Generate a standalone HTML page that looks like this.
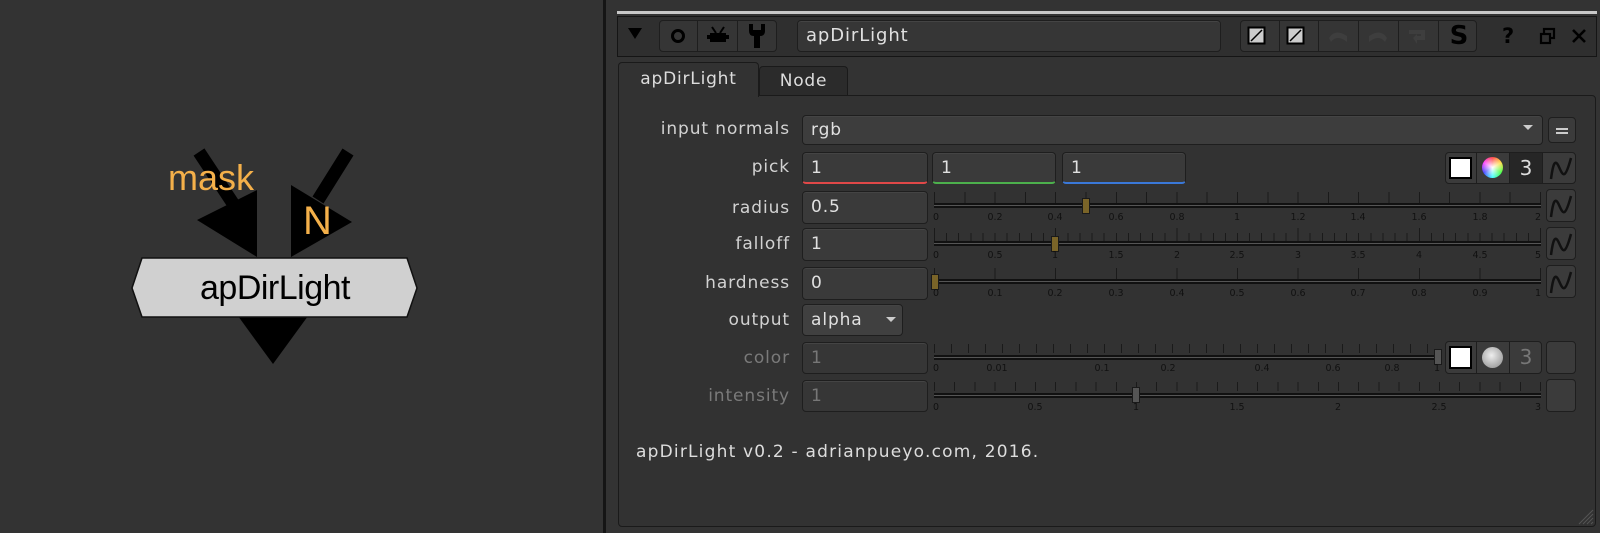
<!DOCTYPE html><html><head><meta charset="utf-8"><style>
*{margin:0;padding:0;box-sizing:border-box}
body{width:1600px;height:533px;background:#333;position:relative;overflow:hidden;font-family:"DejaVu Sans","Liberation Sans",sans-serif;color:#d2d2d2}
.a{position:absolute}
.lbl{position:absolute;right:810px;font-size:17px;letter-spacing:0.9px;line-height:20px;text-align:right;white-space:nowrap}
.dis{color:#7a7a7a}
.fld{position:absolute;background:#3a3a3a;border:1px solid #1e1e1e;border-radius:4px;box-shadow:inset 0 1px 0 #444;font-size:17px;letter-spacing:0.9px;line-height:30px;padding-left:8px;color:#e0e0e0}
.btn{position:absolute;background:#3b3b3b;border:1px solid #1e1e1e;border-radius:4px}
.tk{position:absolute;font-size:9.5px;color:#111;transform:translateX(-50%);line-height:10px}
.line{position:absolute;left:934px;height:5px;border-top:2px solid #111;border-bottom:2px solid #111;background:#555}
.ticks{position:absolute;left:934px;height:11px}
.h{position:absolute;width:8px;height:16px;background:#7a6428;border:1px solid #1a1a1a}
.cv{position:absolute;left:1546px;width:30px;height:33px;background:#3b3b3b;border:1px solid #1e1e1e;border-radius:4px}
</style></head><body>
<!-- node graph -->
<div class="a" style="left:603px;top:0;width:3px;height:533px;background:#151515"></div>
<svg class="a" style="left:0;top:0" width="590" height="533">
<line x1="199" y1="152" x2="236" y2="208" stroke="#000" stroke-width="13"/>
<line x1="348" y1="152" x2="318" y2="200" stroke="#000" stroke-width="13"/>
<polygon points="197,220 257,190 257,257" fill="#000"/>
<polygon points="291,185 352,222 291,257" fill="#000"/>
<polygon points="238,316 308,316 273,364" fill="#000"/>
<polygon points="132,288 142,258 407,258 417,288 407,317 142,317" fill="#d0d0d0" stroke="#111" stroke-width="1.5"/>
<text x="275" y="299" text-anchor="middle" font-family="Liberation Sans" font-size="34" fill="#000" letter-spacing="-0.5">apDirLight</text>
<text x="168" y="190" font-family="Liberation Sans" font-size="36" fill="#f4b04a">mask</text>
<text x="303" y="234" font-family="Liberation Sans" font-size="40" fill="#f4b04a">N</text>
</svg>
<!-- top line -->
<div class="a" style="left:617px;top:11px;width:980px;height:3px;background:#c8c8c8"></div>
<!-- toolbar -->
<div class="a" style="left:617px;top:16px;width:980px;height:41px;background:#2f2f2f;border:1px solid #151515"></div>
<svg class="a" style="left:627px;top:27px" width="16" height="14"><polygon points="1,1 15,1 8,12" fill="#000"/></svg>
<div class="btn" style="left:659px;top:20px;width:118px;height:32px;background:#353535"></div>
<div class="a" style="left:697px;top:21px;width:1px;height:30px;background:#1e1e1e"></div>
<div class="a" style="left:737px;top:21px;width:1px;height:30px;background:#1e1e1e"></div>
<div class="a" style="left:671px;top:29px;width:14px;height:14px;border:3px solid #000;border-radius:50%"></div>
<svg class="a" style="left:706px;top:25px" width="24" height="20"><path d="M6 2 L10 8 M18 2 L14 8" stroke="#000" stroke-width="2"/><rect x="4" y="8" width="16" height="9" fill="#000"/><rect x="1" y="10" width="22" height="4" fill="#000"/></svg>
<svg class="a" style="left:745px;top:22px" width="24" height="28"><path d="M4 2 L4 9 Q4 14 9 14 L9 26 L15 26 L15 14 Q20 14 20 9 L20 2 L16 2 L16 8 L8 8 L8 2 Z" fill="#000"/></svg>
<div class="fld" style="left:797px;top:20px;width:424px;height:32px;background:#363636;font-size:18px">apDirLight</div>
<div class="btn" style="left:1240px;top:20px;width:237px;height:32px;background:#353535"></div>
<div class="a" style="left:1279px;top:21px;width:1px;height:30px;background:#1e1e1e"></div>
<div class="a" style="left:1318px;top:21px;width:1px;height:30px;background:#1e1e1e"></div>
<div class="a" style="left:1358px;top:21px;width:1px;height:30px;background:#1e1e1e"></div>
<div class="a" style="left:1398px;top:21px;width:1px;height:30px;background:#1e1e1e"></div>
<div class="a" style="left:1438px;top:21px;width:1px;height:30px;background:#1e1e1e"></div>
<svg class="a" style="left:1247px;top:26px" width="20" height="20"><rect x="1.5" y="1.5" width="16" height="16" fill="#ccc" stroke="#000" stroke-width="2"/><line x1="4" y1="15" x2="15" y2="4" stroke="#000" stroke-width="1.5"/></svg>
<svg class="a" style="left:1286px;top:26px" width="20" height="20"><rect x="1.5" y="1.5" width="16" height="16" fill="#ccc" stroke="#000" stroke-width="2"/><line x1="4" y1="15" x2="15" y2="4" stroke="#000" stroke-width="1.5"/></svg>
<svg class="a" style="left:1325px;top:26px" width="26" height="20"><path d="M4 12 Q10 2 22 10 L22 16 Q12 8 6 16 Z" fill="#3e3e3e"/></svg>
<svg class="a" style="left:1365px;top:26px" width="26" height="20"><path d="M22 12 Q16 2 4 10 L4 16 Q14 8 20 16 Z" fill="#3e3e3e"/></svg>
<svg class="a" style="left:1405px;top:26px" width="26" height="20"><path d="M4 4 L20 4 L20 14 L12 14 L12 18 L8 12 L12 8 L12 10 L16 10 L16 8 L4 8 Z" fill="#3e3e3e"/></svg>
<div class="a" style="left:1444px;top:20px;width:30px;height:32px;font:bold 26px 'DejaVu Sans',sans-serif;color:#000;text-align:center;line-height:32px">S</div>
<div class="a" style="left:1502px;top:20px;font:bold 21px 'DejaVu Sans',sans-serif;color:#000;line-height:32px">?</div>
<svg class="a" style="left:1539px;top:27px" width="18" height="18"><rect x="5" y="2" width="10" height="9" fill="none" stroke="#000" stroke-width="2.2"/><rect x="2" y="7" width="9" height="9" fill="#2f2f2f" stroke="#000" stroke-width="2.2"/></svg>
<svg class="a" style="left:1571px;top:28px" width="16" height="16"><path d="M2 2 L14 14 M14 2 L2 14" stroke="#000" stroke-width="2.6"/></svg>
<!-- tabs -->
<div class="a" style="left:759px;top:66px;width:89px;height:29px;background:#2b2b2b;border:1px solid #1a1a1a;border-bottom:none;border-radius:4px 4px 0 0;font-size:17px;letter-spacing:0.8px;text-align:center;line-height:28px;color:#ddd">Node</div>
<div class="a" style="left:618px;top:95px;width:978px;height:432px;background:#323232;border:1px solid #1a1a1a;border-radius:0 4px 4px 4px"></div>
<div class="a" style="left:618px;top:62px;width:141px;height:35px;background:#323232;border:1px solid #1a1a1a;border-bottom:none;border-radius:4px 4px 0 0;font-size:17px;letter-spacing:0.8px;text-align:center;line-height:32px;color:#ddd">apDirLight</div>
<svg class="a" style="left:1578px;top:509px" width="16" height="16"><path d="M15 1 L1 15 M15 5 L5 15 M15 9 L9 15 M15 13 L13 15" stroke="#555" stroke-width="1"/></svg>
<!-- labels -->
<div class="lbl" style="top:119px">input normals</div>
<div class="lbl" style="top:157px">pick</div>
<div class="lbl" style="top:198px">radius</div>
<div class="lbl" style="top:234px">falloff</div>
<div class="lbl" style="top:273px">hardness</div>
<div class="lbl" style="top:310px">output</div>
<div class="lbl dis" style="top:348px">color</div>
<div class="lbl dis" style="top:386px">intensity</div>
<!-- input normals -->
<div class="fld" style="left:802px;top:115px;width:741px;height:30px;background:#3d3d3d;line-height:28px">rgb</div>
<svg class="a" style="left:1522px;top:124px" width="12" height="8"><polygon points="1,1 11,1 6,6" fill="#ccc"/></svg>
<div class="btn" style="left:1548px;top:117px;width:28px;height:26px"></div>
<div class="a" style="left:1556px;top:128px;width:12px;height:2px;background:#ccc;box-shadow:0 4px 0 #ccc"></div>
<!-- pick -->
<div class="fld" style="left:802px;top:152px;width:126px;height:32px;border-bottom:2px solid #e04848">1</div>
<div class="fld" style="left:932px;top:152px;width:124px;height:32px;border-bottom:2px solid #4cb04c">1</div>
<div class="fld" style="left:1062px;top:152px;width:124px;height:32px;border-bottom:2px solid #3a78d8">1</div>
<div class="btn" style="left:1445px;top:152px;width:131px;height:32px"></div>
<div class="a" style="left:1476px;top:153px;width:1px;height:30px;background:#1e1e1e"></div>
<div class="a" style="left:1509px;top:153px;width:1px;height:30px;background:#1e1e1e"></div>
<div class="a" style="left:1542px;top:153px;width:1px;height:30px;background:#1e1e1e"></div>
<div class="a" style="left:1449px;top:157px;width:23px;height:22px;background:#fff;border:2px solid #000"></div>
<div class="a" style="left:1482px;top:157px;width:21px;height:21px;border-radius:50%;background:radial-gradient(circle at 50% 50%,#fff 0,rgba(255,255,255,0) 70%),conic-gradient(#f44,#fd4,#4f4,#4ff,#44f,#f4f,#f44)"></div>
<div class="a" style="left:1510px;top:153px;width:32px;height:30px;background:#262626;color:#ddd;font-size:20px;text-align:center;line-height:30px">3</div>
<svg class="a" style="left:1546px;top:152px" width="30" height="32"><path d="M5 27 C7 12 9 6 13 15 S19 28 25 6" fill="none" stroke="#111" stroke-width="2.5"/></svg>
<!-- fields -->
<div class="fld" style="left:802px;top:191px;width:126px;height:33px">0.5</div>
<div class="fld" style="left:802px;top:228px;width:126px;height:33px">1</div>
<div class="fld" style="left:802px;top:267px;width:126px;height:33px">0</div>
<div class="fld" style="left:802px;top:304px;width:101px;height:32px;background:#404040;line-height:30px">alpha</div>
<svg class="a" style="left:885px;top:316px" width="12" height="8"><polygon points="1,1 11,1 6,6" fill="#ccc"/></svg>
<div class="fld" style="left:802px;top:342px;width:126px;height:32px;color:#777;background:#363636">1</div>
<div class="fld" style="left:802px;top:380px;width:126px;height:32px;color:#777;background:#363636">1</div>
<!-- curve buttons -->
<div class="cv" style="top:189px"></div><div class="cv" style="top:227px"></div><div class="cv" style="top:265px"></div>
<div class="cv" style="top:341px"></div><div class="cv" style="top:379px"></div>
<svg class="a" style="left:1546px;top:189px" width="30" height="110"><g fill="none" stroke="#111" stroke-width="2.5"><path d="M5 28 C7 13 9 7 13 16 S19 29 25 7"/><path d="M5 66 C7 51 9 45 13 54 S19 67 25 45"/><path d="M5 104 C7 89 9 83 13 92 S19 105 25 83"/></g></svg>
<!-- radius slider -->
<div class="ticks" style="top:192px;width:607px;background:repeating-linear-gradient(90deg,#1a1a1a 0 1px,transparent 1px 30.3px)"></div>
<div class="line" style="top:203px;width:607px"></div>
<div class="h" style="left:1082px;top:198px"></div>
<div class="tk" style="left:936px;top:213px">0</div><div class="tk" style="left:995px;top:213px">0.2</div><div class="tk" style="left:1055px;top:213px">0.4</div><div class="tk" style="left:1116px;top:213px">0.6</div><div class="tk" style="left:1177px;top:213px">0.8</div><div class="tk" style="left:1237px;top:213px">1</div><div class="tk" style="left:1298px;top:213px">1.2</div><div class="tk" style="left:1358px;top:213px">1.4</div><div class="tk" style="left:1419px;top:213px">1.6</div><div class="tk" style="left:1480px;top:213px">1.8</div><div class="tk" style="left:1538px;top:213px">2</div>
<!-- falloff -->
<div class="ticks" style="top:233px;width:607px;height:9px;background:repeating-linear-gradient(90deg,#1a1a1a 0 1px,transparent 1px 12.12px)"></div>
<div class="ticks" style="top:228px;width:607px;height:6px;background:repeating-linear-gradient(90deg,#1a1a1a 0 1px,transparent 1px 121.2px)"></div>
<div class="line" style="top:241px;width:607px"></div>
<div class="h" style="left:1051px;top:236px"></div>
<div class="tk" style="left:936px;top:251px">0</div><div class="tk" style="left:995px;top:251px">0.5</div><div class="tk" style="left:1055px;top:251px">1</div><div class="tk" style="left:1116px;top:251px">1.5</div><div class="tk" style="left:1177px;top:251px">2</div><div class="tk" style="left:1237px;top:251px">2.5</div><div class="tk" style="left:1298px;top:251px">3</div><div class="tk" style="left:1358px;top:251px">3.5</div><div class="tk" style="left:1419px;top:251px">4</div><div class="tk" style="left:1480px;top:251px">4.5</div><div class="tk" style="left:1538px;top:251px">5</div>
<!-- hardness -->
<div class="ticks" style="top:268px;width:607px;background:repeating-linear-gradient(90deg,#1a1a1a 0 1px,transparent 1px 60.6px)"></div>
<div class="line" style="top:279px;width:607px"></div>
<div class="h" style="left:931px;top:274px"></div>
<div class="tk" style="left:936px;top:289px">0</div><div class="tk" style="left:995px;top:289px">0.1</div><div class="tk" style="left:1055px;top:289px">0.2</div><div class="tk" style="left:1116px;top:289px">0.3</div><div class="tk" style="left:1177px;top:289px">0.4</div><div class="tk" style="left:1237px;top:289px">0.5</div><div class="tk" style="left:1298px;top:289px">0.6</div><div class="tk" style="left:1358px;top:289px">0.7</div><div class="tk" style="left:1419px;top:289px">0.8</div><div class="tk" style="left:1480px;top:289px">0.9</div><div class="tk" style="left:1538px;top:289px">1</div>
<!-- color -->
<div class="ticks" style="top:344px;width:503px;height:9px;background:repeating-linear-gradient(90deg,#1a1a1a 0 1px,transparent 1px 17px)"></div>
<div class="line" style="top:355px;width:503px"></div>
<div class="h" style="left:1434px;top:349px;background:#555"></div>
<div class="tk" style="left:936px;top:364px">0</div><div class="tk" style="left:997px;top:364px">0.01</div><div class="tk" style="left:1102px;top:364px">0.1</div><div class="tk" style="left:1168px;top:364px">0.2</div><div class="tk" style="left:1262px;top:364px">0.4</div><div class="tk" style="left:1333px;top:364px">0.6</div><div class="tk" style="left:1392px;top:364px">0.8</div><div class="tk" style="left:1437px;top:364px">1</div>
<div class="btn" style="left:1445px;top:341px;width:97px;height:33px"></div>
<div class="a" style="left:1476px;top:342px;width:1px;height:31px;background:#1e1e1e"></div>
<div class="a" style="left:1509px;top:342px;width:1px;height:31px;background:#1e1e1e"></div>
<div class="a" style="left:1449px;top:346px;width:23px;height:23px;background:#fff;border:2px solid #000"></div>
<div class="a" style="left:1482px;top:347px;width:21px;height:21px;border-radius:50%;background:radial-gradient(circle at 45% 40%,#eee,#888)"></div>
<div class="a" style="left:1510px;top:342px;width:32px;height:31px;color:#777;font-size:20px;text-align:center;line-height:31px">3</div>
<!-- intensity -->
<div class="ticks" style="top:382px;width:607px;height:9px;background:repeating-linear-gradient(90deg,#1a1a1a 0 1px,transparent 1px 20.2px)"></div>
<div class="line" style="top:393px;width:607px"></div>
<div class="h" style="left:1132px;top:387px;background:#555"></div>
<div class="tk" style="left:936px;top:403px">0</div><div class="tk" style="left:1035px;top:403px">0.5</div><div class="tk" style="left:1136px;top:403px">1</div><div class="tk" style="left:1237px;top:403px">1.5</div><div class="tk" style="left:1338px;top:403px">2</div><div class="tk" style="left:1439px;top:403px">2.5</div><div class="tk" style="left:1538px;top:403px">3</div>
<!-- footer -->
<div class="a" style="left:636px;top:441px;font-size:17px;letter-spacing:1.2px;line-height:22px;white-space:nowrap;color:#ddd">apDirLight v0.2 - adrianpueyo.com, 2016.</div>
</body></html>
